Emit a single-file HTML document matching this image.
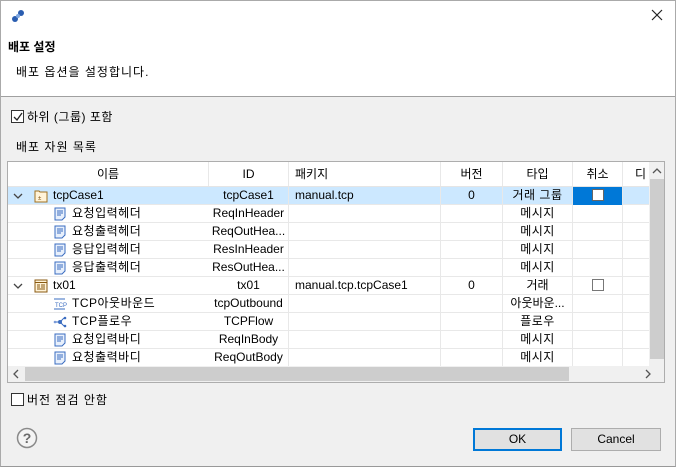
<!DOCTYPE html>
<html><head><meta charset="utf-8"><style>
*{margin:0;padding:0;box-sizing:border-box}
body{width:676px;height:467px;overflow:hidden;background:#f0f0f0;font-family:"Liberation Sans","Noto Sans CJK KR",sans-serif;font-size:12px;color:#000;position:relative}
.a{position:absolute}
.k{letter-spacing:1px}
.k5{letter-spacing:0.5px}
.win{left:0;top:0;width:676px;height:467px;border:1px solid #aaa;border-bottom-color:#999}
.hdr{left:1px;top:1px;width:674px;height:96px;background:#fff;border-bottom:1px solid #a0a0a0}
.cb{width:13px;height:13px;border:1px solid #333;background:#fff}
.tbl{left:7px;top:161px;width:658px;height:222px;border:1px solid #adadad;background:#fff;overflow:hidden}
.row{position:absolute;left:0;height:18px;width:641px;border-bottom:1px solid #e8e8e8}
.c{position:absolute;top:0;height:18px;line-height:17px;white-space:nowrap;overflow:hidden;border-right:1px solid #e8e8e8}
.ctr{text-align:center}
.ic{position:absolute;top:2px;width:14px;height:14px}
.btn{height:23px;border:1px solid #adadad;background:#e1e1e1;text-align:center;line-height:21px}
</style></head><body>
<div class="a win"></div>
<div class="a hdr"></div>
<svg class="a" style="left:10px;top:8px" width="16" height="16" viewBox="0 0 16 16"><circle cx="5" cy="11" r="3" fill="#2a5db0"/><circle cx="11" cy="5" r="3" fill="#2a5db0"/><circle cx="8" cy="8" r="2" fill="#7fa7e0"/></svg>
<svg class="a" style="left:651px;top:9px" width="12" height="12"><path d="M1 1L11 11M11 1L1 11" stroke="#222" stroke-width="1.2"/></svg>
<div class="a" style="left:8px;top:38px;font-weight:bold;font-size:12px">배포 설정</div>
<div class="a k" style="left:16px;top:63px">배포 옵션을 설정합니다.</div>
<div class="a cb" style="left:11px;top:110px"></div>
<svg class="a" style="left:12px;top:111px" width="12" height="12"><path d="M2 6L5 9L10 2" stroke="#222" fill="none" stroke-width="1.3"/></svg>
<div class="a k5" style="left:27px;top:108px">하위 (그룹) 포함</div>
<div class="a k" style="left:16px;top:138px">배포 자원 목록</div>

<div class="a tbl">
 <div class="row" style="top:0;height:25px;border-bottom:1px solid #e5e5e5">
  <div class="c ctr" style="left:0;width:201px;height:24px;line-height:24px">이름</div>
  <div class="c ctr" style="left:201px;width:80px;height:24px;line-height:24px">ID</div>
  <div class="c" style="left:281px;width:152px;height:24px;line-height:24px;padding-left:6px">패키지</div>
  <div class="c ctr" style="left:433px;width:62px;height:24px;line-height:24px">버전</div>
  <div class="c ctr" style="left:495px;width:70px;height:24px;line-height:24px">타입</div>
  <div class="c ctr" style="left:565px;width:50px;height:24px;line-height:24px">취소</div>
  <div class="c" style="left:615px;width:27px;height:24px;line-height:24px;padding-left:12px;border:0">디</div>
 </div>
 <div class="row" style="top:25px;background:#cce8ff">
  <svg class="a" style="left:5px;top:5px" width="10" height="8"><path d="M1 2L5 6L9 2" stroke="#444" fill="none" stroke-width="1.3"/></svg>
  <svg class="ic" style="left:26px" viewBox="0 0 14 14"><path d="M1 2h4l1 1h7v10H1z" fill="#fff3d8" stroke="#a07020"/><text x="4" y="11" font-size="6" fill="#805010">±</text></svg>
  <div class="c" style="left:45px;width:156px;border:0">tcpCase1</div>
  <div class="c ctr" style="left:201px;width:80px">tcpCase1</div>
  <div class="c" style="left:281px;width:152px;padding-left:6px">manual.tcp</div>
  <div class="c ctr" style="left:433px;width:62px">0</div>
  <div class="c ctr k5" style="left:495px;width:70px">거래 그룹</div>
  <div class="c" style="left:565px;width:50px;background:#0078d7"><div class="a cb" style="left:19px;top:2px;width:12px;height:12px;border-color:#666"></div></div>
 </div>
 <div class="row" style="top:43px"><svg class="ic" style="left:45px" viewBox="0 0 14 14"><path d="M2 1h10v9l-3 3H2z" fill="#e8f0fc" stroke="#3a6cc0"/><path d="M4 4h6M4 6h6M4 8h4" stroke="#3a6cc0"/></svg><div class="c k5" style="left:64px;width:137px;border:0">요청입력헤더</div><div class="c ctr" style="left:201px;width:80px">ReqInHeader</div><div class="c" style="left:281px;width:152px"></div><div class="c" style="left:433px;width:62px"></div><div class="c ctr k5" style="left:495px;width:70px">메시지</div><div class="c" style="left:565px;width:50px"></div></div>
 <div class="row" style="top:61px"><svg class="ic" style="left:45px" viewBox="0 0 14 14"><path d="M2 1h10v9l-3 3H2z" fill="#e8f0fc" stroke="#3a6cc0"/><path d="M4 4h6M4 6h6M4 8h4" stroke="#3a6cc0"/></svg><div class="c k5" style="left:64px;width:137px;border:0">요청출력헤더</div><div class="c ctr" style="left:201px;width:80px">ReqOutHea...</div><div class="c" style="left:281px;width:152px"></div><div class="c" style="left:433px;width:62px"></div><div class="c ctr k5" style="left:495px;width:70px">메시지</div><div class="c" style="left:565px;width:50px"></div></div>
 <div class="row" style="top:79px"><svg class="ic" style="left:45px" viewBox="0 0 14 14"><path d="M2 1h10v9l-3 3H2z" fill="#e8f0fc" stroke="#3a6cc0"/><path d="M4 4h6M4 6h6M4 8h4" stroke="#3a6cc0"/></svg><div class="c k5" style="left:64px;width:137px;border:0">응답입력헤더</div><div class="c ctr" style="left:201px;width:80px">ResInHeader</div><div class="c" style="left:281px;width:152px"></div><div class="c" style="left:433px;width:62px"></div><div class="c ctr k5" style="left:495px;width:70px">메시지</div><div class="c" style="left:565px;width:50px"></div></div>
 <div class="row" style="top:97px"><svg class="ic" style="left:45px" viewBox="0 0 14 14"><path d="M2 1h10v9l-3 3H2z" fill="#e8f0fc" stroke="#3a6cc0"/><path d="M4 4h6M4 6h6M4 8h4" stroke="#3a6cc0"/></svg><div class="c k5" style="left:64px;width:137px;border:0">응답출력헤더</div><div class="c ctr" style="left:201px;width:80px">ResOutHea...</div><div class="c" style="left:281px;width:152px"></div><div class="c" style="left:433px;width:62px"></div><div class="c ctr k5" style="left:495px;width:70px">메시지</div><div class="c" style="left:565px;width:50px"></div></div>
 <div class="row" style="top:115px">
  <svg class="a" style="left:5px;top:5px" width="10" height="8"><path d="M1 2L5 6L9 2" stroke="#444" fill="none" stroke-width="1.3"/></svg>
  <svg class="ic" style="left:26px" viewBox="0 0 14 14"><rect x="1" y="1" width="12" height="12" fill="#fff3d8" stroke="#8a5a10"/><path d="M1 3.5h12M3 6h3M7 6h4M3 8h3M7 8h4M3 10h8" stroke="#8a5a10"/></svg>
  <div class="c" style="left:45px;width:156px;border:0">tx01</div>
  <div class="c ctr" style="left:201px;width:80px">tx01</div>
  <div class="c" style="left:281px;width:152px;padding-left:6px">manual.tcp.tcpCase1</div>
  <div class="c ctr" style="left:433px;width:62px">0</div>
  <div class="c ctr" style="left:495px;width:70px">거래</div>
  <div class="c" style="left:565px;width:50px"><div class="a cb" style="left:19px;top:2px;width:12px;height:12px;border-color:#777"></div></div>
 </div>
 <div class="row" style="top:133px"><svg class="ic" style="left:45px" viewBox="0 0 14 14"><path d="M1 2h11M1 12h11" stroke="#3a6cc0"/><text x="2" y="10" font-size="6" fill="#3a6cc0" font-family="Liberation Sans">TCP</text></svg><div class="c k5" style="left:64px;width:137px;border:0">TCP아웃바운드</div><div class="c ctr" style="left:201px;width:80px">tcpOutbound</div><div class="c" style="left:281px;width:152px"></div><div class="c" style="left:433px;width:62px"></div><div class="c ctr" style="left:495px;width:70px">아웃바운...</div><div class="c" style="left:565px;width:50px"></div></div>
 <div class="row" style="top:151px"><svg class="ic" style="left:45px" viewBox="0 0 14 14"><circle cx="2" cy="7" r="1.3" fill="#7a9ad8"/><circle cx="7" cy="7" r="2" fill="#3a6cc0"/><circle cx="12" cy="3" r="1.3" fill="#3a6cc0"/><circle cx="12" cy="11" r="1.3" fill="#3a6cc0"/><path d="M3 7h3M8 6l3-3M8 8l3 3" stroke="#3a6cc0"/></svg><div class="c k5" style="left:64px;width:137px;border:0">TCP플로우</div><div class="c ctr" style="left:201px;width:80px">TCPFlow</div><div class="c" style="left:281px;width:152px"></div><div class="c" style="left:433px;width:62px"></div><div class="c ctr k5" style="left:495px;width:70px">플로우</div><div class="c" style="left:565px;width:50px"></div></div>
 <div class="row" style="top:169px"><svg class="ic" style="left:45px" viewBox="0 0 14 14"><path d="M2 1h10v9l-3 3H2z" fill="#e8f0fc" stroke="#3a6cc0"/><path d="M4 4h6M4 6h6M4 8h4" stroke="#3a6cc0"/></svg><div class="c k5" style="left:64px;width:137px;border:0">요청입력바디</div><div class="c ctr" style="left:201px;width:80px">ReqInBody</div><div class="c" style="left:281px;width:152px"></div><div class="c" style="left:433px;width:62px"></div><div class="c ctr k5" style="left:495px;width:70px">메시지</div><div class="c" style="left:565px;width:50px"></div></div>
 <div class="row" style="top:187px;border:0"><svg class="ic" style="left:45px" viewBox="0 0 14 14"><path d="M2 1h10v9l-3 3H2z" fill="#e8f0fc" stroke="#3a6cc0"/><path d="M4 4h6M4 6h6M4 8h4" stroke="#3a6cc0"/></svg><div class="c k5" style="left:64px;width:137px;border:0">요청출력바디</div><div class="c ctr" style="left:201px;width:80px">ReqOutBody</div><div class="c" style="left:281px;width:152px"></div><div class="c" style="left:433px;width:62px"></div><div class="c ctr k5" style="left:495px;width:70px">메시지</div><div class="c" style="left:565px;width:50px"></div></div>
 <div class="a" style="left:641px;top:0;width:16px;height:204px;background:#f0f0f0"></div>
 <div class="a" style="left:642px;top:17px;width:14px;height:180px;background:#cdcdcd"></div>
 <svg class="a" style="left:644px;top:5px" width="10" height="8"><path d="M1 6L5 2L9 6" stroke="#555" fill="none" stroke-width="1.3"/></svg>
 <div class="a" style="left:0;top:204px;width:657px;height:16px;background:#f0f0f0"></div>
 <div class="a" style="left:17px;top:205px;width:544px;height:14px;background:#cdcdcd"></div>
 <svg class="a" style="left:4px;top:207px" width="8" height="10"><path d="M6 1L2 5L6 9" stroke="#555" fill="none" stroke-width="1.3"/></svg>
 <svg class="a" style="left:636px;top:207px" width="8" height="10"><path d="M2 1L6 5L2 9" stroke="#555" fill="none" stroke-width="1.3"/></svg>
</div>

<div class="a cb" style="left:11px;top:393px"></div>
<div class="a k" style="left:27px;top:391px">버전 점검 안함</div>
<svg class="a" style="left:16px;top:427px" width="22" height="22" viewBox="0 0 22 22"><circle cx="11" cy="11" r="9.5" fill="#f4f4f4" stroke="#8a8a8a" stroke-width="1.5"/><text x="11" y="16" text-anchor="middle" font-size="14" font-weight="bold" fill="#6a6a6a" font-family="Liberation Sans">?</text></svg>
<div class="a btn" style="left:473px;top:428px;width:89px;border:2px solid #0078d7;line-height:19px">OK</div>
<div class="a btn" style="left:571px;top:428px;width:90px">Cancel</div>
</body></html>
